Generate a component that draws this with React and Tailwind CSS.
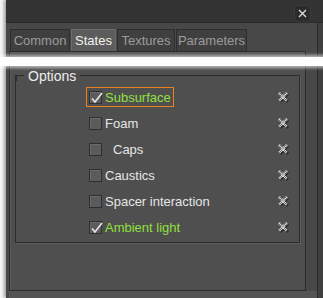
import React from 'react';

const rows = [
  { label: 'Subsurface', checked: true, focus: true },
  { label: 'Foam', checked: false },
  { label: 'Caps', checked: false, indent: true },
  { label: 'Caustics', checked: false },
  { label: 'Spacer interaction', checked: false },
  { label: 'Ambient light', checked: true },
];

const tabs = [
  { name: 'Common', w: 'w-[60px]' },
  { name: 'States', w: 'w-[45px]', active: true },
  { name: 'Textures', w: 'w-[58px]' },
  { name: 'Parameters', w: 'w-[71px]' },
];

const Check = () => (
  <svg width="13" height="13" viewBox="0 0 13 13" className="absolute left-0 top-0">
    <path d="M2 6.5 L5 10 L12 1" fill="none" stroke="#e8e8e8" strokeWidth="1.6" />
  </svg>
);

const Remove = () => (
  <svg width="12" height="12" viewBox="0 0 12 12">
    <path d="M2 2 L10 10 M10 2 L2 10" stroke="#1e1e1e" strokeWidth="3" transform="translate(0.8 0.8)" />
    <path d="M2 2 L10 10 M10 2 L2 10" stroke="#e6e6e6" strokeWidth="2.6" strokeDasharray="1 0.6" />
  </svg>
);

const Row = ({ label, checked, focus, indent }) => (
  <div className="h-[26px] flex items-center">
    <div className="w-[70px]" />
    <div className={`flex items-center h-[20px] pl-[2px] pr-[2px] border ${focus ? 'border-[#e8821e]' : 'border-transparent'}`}>
      <div className="relative w-[13px] h-[13px] bg-[#5b5b5b] border border-[#2f2f2f] shadow-[inset_1px_1px_0_#6a6a6a]">
        {checked && <Check />}
      </div>
      <span className={`${indent ? 'ml-[11px]' : 'ml-[3px]'} ${checked ? 'text-[#8fe03c]' : 'text-[#e6e6e6]'}`}>{label}</span>
    </div>
    <div className="flex-1" />
    <div className="w-[12px] mr-[10px] flex justify-center">
      <Remove />
    </div>
  </div>
);

export default function App() {
  return (
    <div className="relative w-[323px] h-[298px] overflow-hidden bg-[#f4f4f4] font-['Liberation_Sans',Arial,sans-serif] text-[13px] leading-none">
      <div className="absolute left-[6px] top-0 w-[317px] h-[298px] flex flex-col bg-[#484848] shadow-[-2px_0_3px_rgba(0,0,0,0.35)]">
        {/* title bar */}
        <div className="h-[23px] bg-[#333333] border-b border-[#2a2a2a] flex items-center justify-end pr-[12px] shrink-0">
          <div className="w-[17px] h-[17px] mt-[4px] rounded-[3px] bg-[#2b2b2b] border border-[#3b3b3b] flex items-center justify-center">
            <svg width="9" height="9" viewBox="0 0 9 9">
              <path d="M1 1 L8 8 M8 1 L1 8" stroke="#d8d8d8" strokeWidth="1.4" />
            </svg>
          </div>
        </div>

        <div className="flex flex-1">
          <div className="flex-1 flex flex-col pl-[3px] pt-[6px]">
            {/* tabs */}
            <div className="flex gap-[1px] pl-[1px] h-[22px] items-end">
              {tabs.map((t) => (
                <div
                  key={t.name}
                  className={`${t.w} h-[22px] flex items-center justify-center border border-b-0 ${
                    t.active
                      ? 'bg-[#5c5c5c] border-[#6a6a6a] text-[#f2f2f2]'
                      : 'bg-[#3f3f3f] border-[#2e2e2e] text-[#9c9c9c]'
                  }`}
                >
                  {t.name}
                </div>
              ))}
            </div>

            {/* tab page */}
            <div className="w-[297px] h-[240px] border border-[#2c2c2c] bg-[#4f4f4f] shadow-[inset_1px_1px_0_#5a5a5a] px-[5px] pt-[23px]">
              <div className="relative border border-[#2c2c2c] shadow-[1px_1px_0_#5c5c5c] h-[168px] pt-[8px]">
                <div className="absolute -top-[8px] left-[8px] px-[4px] bg-[#4f4f4f] text-[#ececec] text-[14px] leading-[16px]">
                  Options
                </div>
                <div className="absolute -top-[1px] left-[0px] w-[6px] h-[6px] border-l border-t border-[#2c2c2c]" />
                {rows.map((r) => (
                  <Row key={r.label} {...r} />
                ))}
              </div>
            </div>
            <div className="flex-1 bg-[#555555]" />
          </div>
          <div className="w-[1px] bg-[#2a2a2a]" />
          <div className="w-[5px] bg-[#404040]" />
        </div>
      </div>

      {/* overlapping white strip */}
      <div className="absolute left-0 top-[57px] w-[323px] h-[9px] bg-white shadow-[0_0_3px_2px_rgba(255,255,255,0.6)]" />
    </div>
  );
}
